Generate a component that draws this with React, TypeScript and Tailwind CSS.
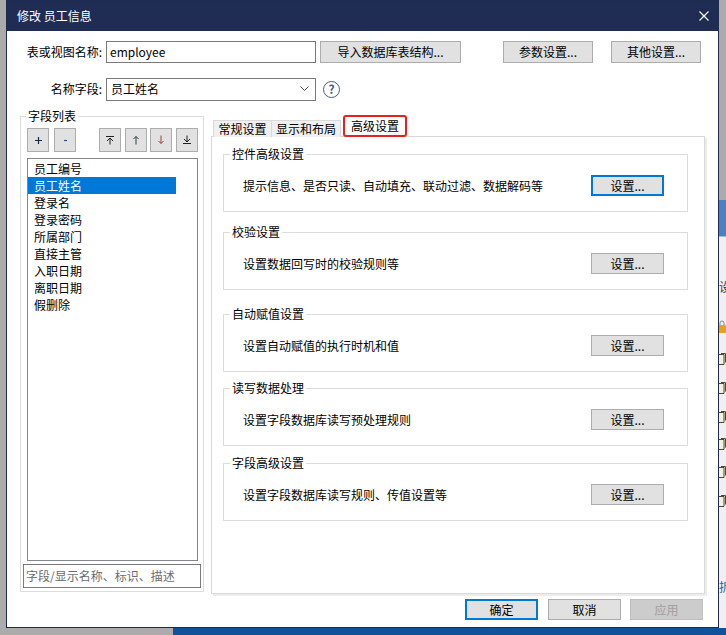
import React from "react";

const fields = ["员工编号", "员工姓名", "登录名", "登录密码", "所属部门", "直接主管", "入职日期", "离职日期", "假删除"];

const groups = [
  { title: "控件高级设置", desc: "提示信息、是否只读、自动填充、联动过滤、数据解码等", focused: true, mt: "mt-[9px]" },
  { title: "校验设置", desc: "设置数据回写时的校验规则等", focused: false, mt: "mt-[12px]" },
  { title: "自动赋值设置", desc: "设置自动赋值的执行时机和值", focused: false, mt: "mt-[16px]" },
  { title: "读写数据处理", desc: "设置字段数据库读写预处理规则", focused: false, mt: "mt-[8px]" },
  { title: "字段高级设置", desc: "设置字段数据库读写规则、传值设置等", focused: false, mt: "mt-[9px]" },
];

function WinButton({
  children,
  className = "",
  focused = false,
  disabled = false,
}: {
  children: React.ReactNode;
  className?: string;
  focused?: boolean;
  disabled?: boolean;
}) {
  const border = focused
    ? "border-2 border-[#0078d7] bg-[#e1e1e1]"
    : disabled
    ? "border border-[#bfbfbf] bg-[#cccccc] text-[#a0a0a0]"
    : "border border-[#adadad] bg-[#e1e1e1]";
  return (
    <div className={`flex items-center justify-center shrink-0 ${border} ${className}`}>
      {children}
    </div>
  );
}

function ToolIcon({ kind }: { kind: string }) {
  if (kind === "plus")
    return (
      <svg width="9" height="9" viewBox="0 0 9 9">
        <path d="M4.5 1v7M1 4.5h7" stroke="#1b2450" strokeWidth="1.2" />
      </svg>
    );
  if (kind === "minus")
    return (
      <svg width="9" height="9" viewBox="0 0 9 9">
        <path d="M3 4.5h3" stroke="#2a4f8a" strokeWidth="1.2" />
      </svg>
    );
  if (kind === "top")
    return (
      <svg width="10" height="10" viewBox="0 0 10 10">
        <path d="M1 1.5h8M5 3v6.5M2 6l3-3 3 3" stroke="#222" strokeWidth="1" fill="none" />
      </svg>
    );
  if (kind === "up")
    return (
      <svg width="8" height="10" viewBox="0 0 8 10">
        <path d="M4 1.5v8M1.5 4l2.5-2.5L6.5 4" stroke="#2d3e48" strokeWidth="1" fill="none" />
      </svg>
    );
  if (kind === "down")
    return (
      <svg width="8" height="10" viewBox="0 0 8 10">
        <path d="M4 0.5v8M1.5 6l2.5 2.5L6.5 6" stroke="#a83c3c" strokeWidth="1" fill="none" />
      </svg>
    );
  return (
    <svg width="10" height="10" viewBox="0 0 10 10">
      <path d="M5 0.5v6.5M2 4l3 3 3-3M1 8.5h8" stroke="#222" strokeWidth="1" fill="none" />
    </svg>
  );
}

function DocIcon({ className = "" }: { className?: string }) {
  return (
    <svg width="7" height="12" viewBox="0 0 7 12" className={className}>
      <path d="M0 1.5h5v10H0M2 0.5h4.5v9" stroke="#4a4a2a" strokeWidth="1" fill="#f4f1dc" />
    </svg>
  );
}

function RightStrip() {
  return (
    <div className="w-[7px] h-full flex flex-col overflow-hidden">
      <div className="h-[200px] bg-[#ababab] shrink-0" />
      <div className="h-[36px] bg-[#4c80c4] shrink-0" />
      <div className="h-[1px] bg-[#9ebde0] shrink-0" />
      <div className="flex-1 bg-[#f0f0f0] flex flex-col">
        <div className="mt-[44px] text-[12px] leading-[12px] text-[#333]">设</div>
        <svg width="7" height="13" viewBox="0 0 7 13" className="mt-[27px]">
          <path d="M1 5V3a2 2 0 0 1 4 0v2" stroke="#888" strokeWidth="1" fill="none" />
          <rect x="0" y="5" width="7" height="8" fill="#e8a020" />
        </svg>
        <DocIcon className="mt-[20px]" />
        <DocIcon className="mt-[17px]" />
        <DocIcon className="mt-[17px]" />
        <DocIcon className="mt-[15px]" />
        <DocIcon className="mt-[16px]" />
        <DocIcon className="mt-[17px]" />
        <div className="mt-[74px] text-[12px] leading-[12px] text-[#1a5fa8]">拆</div>
      </div>
    </div>
  );
}

function GroupBox({ title, desc, focused, mt }: { title: string; desc: string; focused: boolean; mt: string }) {
  return (
    <fieldset className={`w-[465px] border border-[#dcdcdc] ${mt}`}>
      <legend className="ml-[6px] px-[2px] leading-[16px]">{title}</legend>
      <div className="flex items-center justify-between mt-[13px] mb-[15px] pl-[19px] pr-[23px]">
        <span>{desc}</span>
        <WinButton focused={focused} className="w-[73px] h-[21px]">
          设置...
        </WinButton>
      </div>
    </fieldset>
  );
}

export default function App() {
  return (
    <div className="w-[726px] h-[635px] flex flex-col bg-[#ababab] overflow-hidden font-['Noto_Sans_CJK_SC','Liberation_Sans',sans-serif] text-[12px] leading-[16px] text-black">
      <div className="flex h-[628px] shrink-0">
        <div className="w-[6px] shrink-0" />
        {/* dialog */}
        <div className="w-[713px] h-full flex flex-col border border-[#1f2c52] bg-white shrink-0">
          <div className="h-[30px] shrink-0 flex items-center justify-between bg-[#1f2d54] pl-[10px] pr-[9px] text-white">
            <span className="text-[12px]">修改 员工信息</span>
            <svg width="10" height="10" viewBox="0 0 10 10">
              <path d="M0.5 0.5l9 9M9.5 0.5l-9 9" stroke="#fff" strokeWidth="1.2" />
            </svg>
          </div>

          {/* row 1 */}
          <div className="mt-[10px] h-[22px] flex items-center">
            <span className="w-[95px] text-right">表或视图名称:</span>
            <div className="ml-[4px] w-[210px] h-[22px] border border-[#7a7a7a] flex items-center pl-[3px]">employee</div>
            <WinButton className="ml-[4px] w-[141px] h-[22px]">导入数据库表结构...</WinButton>
            <WinButton className="ml-[42px] w-[90px] h-[22px]">参数设置...</WinButton>
            <WinButton className="ml-[18px] w-[90px] h-[22px]">其他设置...</WinButton>
          </div>

          {/* row 2 */}
          <div className="mt-[14px] h-[24px] flex items-center">
            <span className="w-[95px] text-right">名称字段:</span>
            <div className="ml-[4px] w-[210px] h-[23px] border border-[#7a7a7a] flex items-center justify-between pl-[4px] pr-[6px]">
              <span>员工姓名</span>
              <svg width="9" height="6" viewBox="0 0 9 6">
                <path d="M0.5 0.5l4 4 4-4" stroke="#444" strokeWidth="1" fill="none" />
              </svg>
            </div>
            <span className="ml-[7px] w-[17px] h-[17px] rounded-full border-[1.5px] border-[#4a5a7e] text-[#4a5a7e] flex items-center justify-center text-[12px] leading-none font-bold">
              ?
            </span>
          </div>

          {/* main */}
          <div className="mt-[7px] h-[486px] flex shrink-0">
            <fieldset className="ml-[13px] w-[184px] h-[484px] border border-[#dcdcdc] flex flex-col shrink-0">
              <legend className="ml-[5px] px-[2px] leading-[16px]">字段列表</legend>
              <div className="mt-[4px] ml-[6px] flex">
                <WinButton className="w-[22px] h-[24px]"><ToolIcon kind="plus" /></WinButton>
                <WinButton className="ml-[5px] w-[22px] h-[24px]"><ToolIcon kind="minus" /></WinButton>
                <WinButton className="ml-[23px] w-[22px] h-[24px]"><ToolIcon kind="top" /></WinButton>
                <WinButton className="ml-[4px] w-[22px] h-[24px]"><ToolIcon kind="up" /></WinButton>
                <WinButton className="ml-[3px] w-[22px] h-[24px]"><ToolIcon kind="down" /></WinButton>
                <WinButton className="ml-[4px] w-[22px] h-[24px]"><ToolIcon kind="bottom" /></WinButton>
              </div>
              <div className="mt-[6px] ml-[6px] w-[171px] h-[403px] border border-[#828790] pt-[1px] flex flex-col">
                {fields.map((f, i) => (
                  <div
                    key={f}
                    className={`w-[148px] h-[17px] pl-[6px] flex items-center ${
                      i === 1 ? "bg-[#0078d7] text-white" : ""
                    }`}
                  >
                    {f}
                  </div>
                ))}
              </div>
              <div className="mt-[3px] ml-[2px] w-[178px] h-[24px] border border-[#7a7a7a] flex items-center pl-[2px] text-[#6d6d6d]">
                字段/显示名称、标识、描述
              </div>
            </fieldset>

            <div className="ml-[7px] w-[494px] flex flex-col shrink-0">
              <div className="mt-[7px] h-[22px] flex items-end pl-[2px] -mb-[1px] relative z-10">
                <div className="w-[59px] h-[17px] border border-b-0 border-[#d9d9d9] bg-[#f0f0f0] flex items-center justify-center">
                  常规设置
                </div>
                <div className="-ml-px w-[70px] h-[17px] border border-b-0 border-[#d9d9d9] bg-[#f0f0f0] flex items-center justify-center">
                  显示和布局
                </div>
                <div className="ml-[2px] w-[64px] h-[22px] border-2 border-[#e8201e] rounded-[3px] bg-white flex items-center justify-center">
                  高级设置
                </div>
              </div>
              <div className="flex-1 border border-[#d9d9d9] bg-white pl-[11px] flex flex-col shadow-[2px_2px_0_#ececec]">
                {groups.map((g) => (
                  <GroupBox key={g.title} {...g} />
                ))}
              </div>
            </div>
          </div>

          {/* bottom buttons */}
          <div className="mt-[5px] flex justify-end pr-[15px]">
            <WinButton focused className="w-[73px] h-[21px]">确定</WinButton>
            <WinButton className="ml-[10px] w-[73px] h-[21px]">取消</WinButton>
            <WinButton disabled className="ml-[9px] w-[73px] h-[21px]">应用</WinButton>
          </div>
        </div>
        <RightStrip />
      </div>
      <div className="flex h-[7px] shrink-0">
        <div className="w-[173px] bg-[#ababab]" />
        <div className="flex-1 bg-[#10529a]" />
      </div>
    </div>
  );
}
